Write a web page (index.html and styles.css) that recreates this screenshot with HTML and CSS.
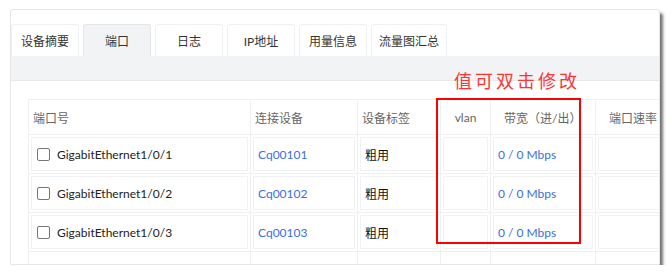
FILE: index.html
```html
<!DOCTYPE html>
<html>
<head>
    <title>端口</title>
    <link rel="stylesheet" href="styles.css">
</head>
<body>
    <div class="panel">
        <div class="tabs">
            <div class="tab">设备摘要</div>
            <div class="tab active">端口</div>
            <div class="tab">日志</div>
            <div class="tab">IP地址</div>
            <div class="tab">用量信息</div>
            <div class="tab wide">流量图汇总</div>
        </div>
        <div class="band"></div>
        <div class="content">
            <table class="ports">
                <colgroup>
                    <col style="width:222px">
                    <col style="width:107px">
                    <col style="width:83px">
                    <col style="width:50px">
                    <col style="width:105px">
                    <col style="width:100px">
                </colgroup>
                <thead>
                    <tr>
                        <th>端口号</th>
                        <th>连接设备</th>
                        <th>设备标签</th>
                        <th class="center">vlan</th>
                        <th class="indent">带宽（进/出）</th>
                        <th class="indent">端口速率</th>
                    </tr>
                </thead>
                <tbody>
                    <tr>
                        <td><div class="cell"><span class="check"></span>GigabitEthernet1/0/1</div></td>
                        <td><div class="cell link">Cq00101</div></td>
                        <td><div class="cell tag">粗用</div></td>
                        <td><div class="cell"></div></td>
                        <td><div class="cell link">0 / 0 Mbps</div></td>
                        <td><div class="cell"></div></td>
                    </tr>
                    <tr>
                        <td><div class="cell"><span class="check"></span>GigabitEthernet1/0/2</div></td>
                        <td><div class="cell link">Cq00102</div></td>
                        <td><div class="cell tag">粗用</div></td>
                        <td><div class="cell"></div></td>
                        <td><div class="cell link">0 / 0 Mbps</div></td>
                        <td><div class="cell"></div></td>
                    </tr>
                    <tr>
                        <td><div class="cell"><span class="check"></span>GigabitEthernet1/0/3</div></td>
                        <td><div class="cell link">Cq00103</div></td>
                        <td><div class="cell tag">粗用</div></td>
                        <td><div class="cell"></div></td>
                        <td><div class="cell link">0 / 0 Mbps</div></td>
                        <td><div class="cell"></div></td>
                    </tr>
                    <tr class="partial">
                        <td></td><td></td><td></td><td></td><td></td><td></td>
                    </tr>
                </tbody>
            </table>
            <div class="note">值可双击修改</div>
            <div class="note-box"></div>
        </div>
    </div>
</body>
</html>
```

FILE: styles.css
```css
* {
    box-sizing: border-box;
    font-family: Lato, "Noto Sans CJK SC", sans-serif;
}
body {
    margin: 0;
    background-color: #fff;
    padding: 9px 0 0 10px;
}
.panel {
    width: 650px;
    height: 256px;
    background-color: #fff;
    border: 1px solid #e6e6e6;
    border-radius: 3px 3px 0 0;
    box-shadow: 3px 4px 3px rgba(0, 0, 0, 0.55);
    overflow: hidden;
}
.tabs {
    display: flex;
    gap: 4px;
    padding: 14px 0 0 0;
    height: 46px;
}
.tab {
    width: 68px;
    height: 32px;
    border: 1px solid #eef0f3;
    border-bottom: none;
    border-radius: 3px 3px 0 0;
    display: flex;
    align-items: center;
    justify-content: center;
    font-size: 12px;
    color: #333;
}
.tab.wide {
    width: 76px;
}
.tab.active {
    background-color: #f2f3f5;
    border-color: #e4e6ea;
}
.band {
    height: 25px;
    background-color: #f2f3f5;
    border-bottom: 1px solid #e8e9ec;
}
.content {
    position: relative;
    padding: 18px 0 0 17px;
}
.ports {
    border-collapse: collapse;
    table-layout: fixed;
    width: 667px;
    font-size: 12px;
}
.ports th,
.ports td {
    border: 1px solid #eef0f2;
    padding: 0;
    text-align: left;
    vertical-align: middle;
}
.ports th {
    height: 35px;
    font-weight: normal;
    color: #666;
    padding-left: 4px;
}
.ports th.center {
    text-align: center;
    padding-left: 0;
}
.ports th.indent {
    padding-left: 13px;
}
.ports td {
    height: 39px;
    padding: 2px;
}
.cell {
    height: 100%;
    border: 1px solid #f1f2f4;
    display: flex;
    align-items: center;
    padding-left: 4px;
    color: #222;
    font-size: 12px;
    white-space: nowrap;
}
.cell.link {
    color: #3a6fe0;
}
.cell.tag {
    color: #111;
}
.check {
    width: 13px;
    height: 13px;
    border: 1.5px solid #777;
    border-radius: 2px;
    margin: 0 7px 0 1px;
}
.ports tr.partial td {
    height: 20px;
}
.note {
    position: absolute;
    left: 443px;
    top: -14px;
    font-size: 18px;
    color: #f33;
    letter-spacing: 3px;
}
.note-box {
    position: absolute;
    left: 425px;
    top: 17px;
    width: 145px;
    height: 146px;
    border: 2px solid #f00;
}
```
